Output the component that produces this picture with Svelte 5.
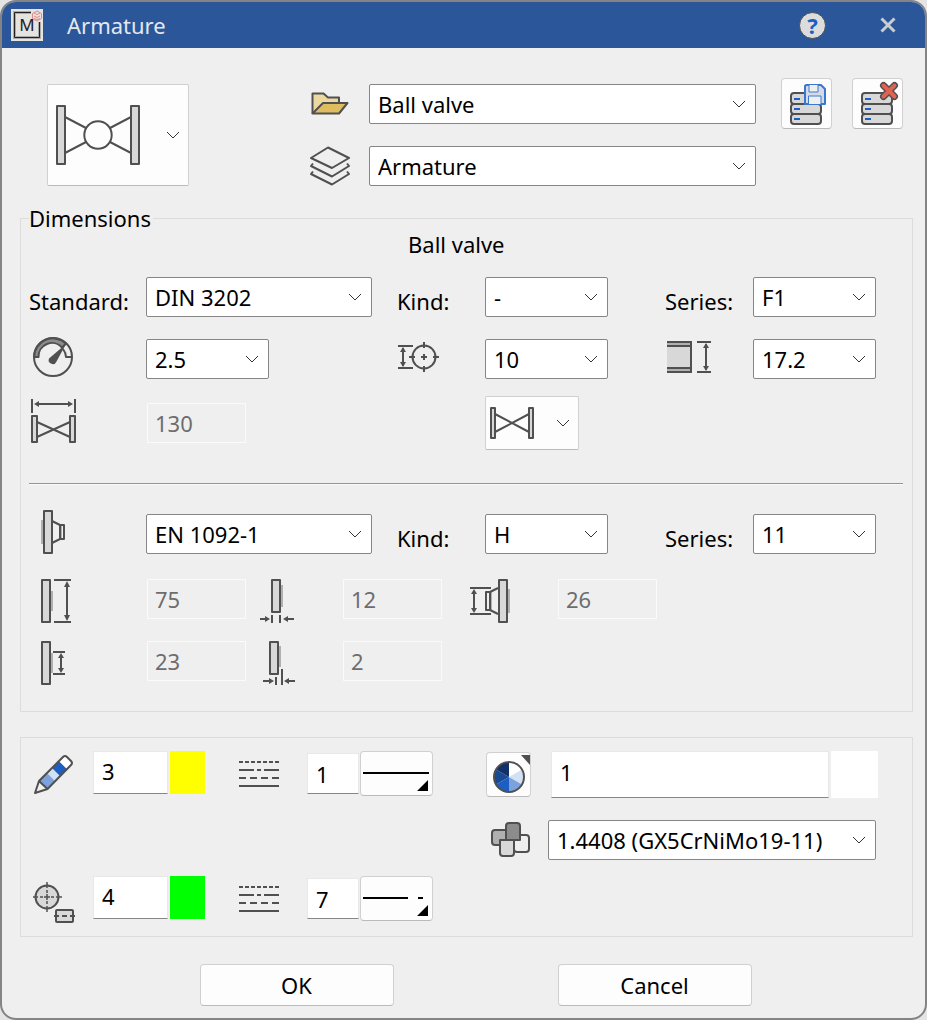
<script lang="ts">
	let preset = $state("Ball valve");
	let layer = $state("Armature");
	let color = $state("3");
	let lineType = $state("1");
	let axisColor = $state("4");
	let axisLineType = $state("7");
	let fill = $state("1");

	/**
	 * Sectors of the colour wheel, clockwise from the top
	 */
	const wheel = ["#ffffff", "#d3e1f5", "#7ba2dc", "#1c5fc4", "#1a4a94", "#12306a"];

	function sector(index: number) {
		const point = (step: number) => {
			const angle = (step * Math.PI) / 3;
			return `${22 + 15 * Math.sin(angle)} ${24 - 15 * Math.cos(angle)}`;
		};
		return `M22 24L${point(index)}A15 15 0 0 1 ${point(index + 1)}Z`;
	}
</script>

{#snippet chevron()}
	<svg class="chevron" width="14" height="8" viewBox="0 0 14 8" aria-hidden="true">
		<path d="M1 1l6 6 6-6" />
	</svg>
{/snippet}

{#snippet combo(label: string, value: string, size: string)}
	<div class="combo {size}">
		<select aria-label={label}>
			<option>{value}</option>
		</select>
		{@render chevron()}
	</div>
{/snippet}

{#snippet database()}
	<g class="db">
		<rect x="9" y="14" width="30" height="11" rx="3" />
		<rect x="9" y="25" width="30" height="10" rx="3" />
		<rect x="9" y="35" width="30" height="10" rx="3" />
	</g>
	<path class="lamp" d="M12 20h6M12 30h6M12 40h6" />
{/snippet}

{#snippet lineTypes()}
	<svg class="icon" width="40" height="28" viewBox="0 0 40 28" aria-hidden="true">
		<path d="M0 2h40" stroke-dasharray="4 2" />
		<path d="M0 10h15M18 10h4M25 10h15M0 26h40" />
		<path d="M0 18h40" stroke-dasharray="7 4" />
	</svg>
{/snippet}

<div class="dialog" role="dialog" aria-labelledby="title">
	<header>
		<svg width="32" height="32" viewBox="0 0 32 32" aria-hidden="true">
			<rect width="32" height="32" fill="#e6e4e1" />
			<path d="M20 3.500H3.500v25h25V13" fill="none" stroke="#aaa" stroke-width="3" />
			<path d="M20 3.500H3.500v25h25V13" fill="none" stroke="#222" />
			<text x="16" y="22" text-anchor="middle" font-size="17" fill="#222">M</text>
			<path d="M26 2l4.500 2.500v5L26 12l-4.500-2.500v-5zM23 4l3 1.500L29 4M23 7l3 1.500L29 7M23 9.500l3 1 3-1" fill="none" stroke="#dc8b8b" />
		</svg>
		<h1 id="title">Armature</h1>
		<button class="help" aria-label="Help">?</button>
		<button class="close" aria-label="Close">
			<svg width="16" height="16" viewBox="0 0 16 16"><path d="M1.500 1.500l13 13M14.500 1.500l-13 13" /></svg>
		</button>
	</header>

	<main>
		<section class="top">
			<button class="picker large" aria-label="Armature type">
				<svg class="icon" width="84" height="60" viewBox="0 0 84 60">
					<path d="M9 12l21 11M9 48l21-11M75 12L54 23M75 48L54 37" />
					<circle cx="42" cy="30" r="13.700" />
					<rect class="body" x="1" y="1" width="8" height="58" />
					<rect class="body" x="75" y="1" width="8" height="58" />
				</svg>
				{@render chevron()}
			</button>
			<div class="presets">
				<svg class="icon" width="42" height="26" viewBox="0 0 42 26" aria-hidden="true">
					<path d="M2.500 22.500v-20h11L18 6.500h11V12" fill="#edd9a0" />
					<path d="M2.500 22.500L13 12h24.500L29 22.500z" fill="#dfbc5e" />
				</svg>
				<div class="combo">
					<select aria-label="Preset" bind:value={preset}><option>Ball valve</option></select>
					{@render chevron()}
				</div>
				<svg class="icon" width="42" height="40" viewBox="0 0 42 40" aria-hidden="true">
					<path d="M18 1.500L39 12 22 22 1 12z" />
					<path d="M3 17.500L1 20l21 10.500L39 20l-2-2.500M3 25.500L1 28l21 10.500L39 28l-2-2.500" />
				</svg>
				<div class="combo">
					<select aria-label="Layer" bind:value={layer}><option>Armature</option></select>
					{@render chevron()}
				</div>
			</div>
			<div class="tools">
				<button aria-label="Save to database">
					<svg class="icon" width="49" height="49" viewBox="0 0 49 49">
						{@render database()}
						<g stroke="#3a78d0" fill="#d5dbe6">
							<path d="M24 6h15l4 4v15H23V7z" />
							<path d="M27 6v7h9V6M26.500 25v-8H39v8" fill="#efefef" stroke-width="1" />
						</g>
					</svg>
				</button>
				<button aria-label="Delete from database">
					<svg class="icon" width="49" height="49" viewBox="0 0 49 49">
						{@render database()}
						<path d="M30.500 6.500l11 11M41.500 6.500l-11 11" stroke-width="7" stroke-linecap="round" />
						<path d="M30.500 6.500l11 11M41.500 6.500l-11 11" stroke="#e06250" stroke-width="4" stroke-linecap="round" />
					</svg>
				</button>
			</div>
		</section>

		<fieldset>
			<legend>Dimensions</legend>
			<h2>Ball valve</h2>

			<div class="dims">
				<span class="label">Standard:</span>
				{@render combo("Standard", "DIN 3202", "wide")}
				<span class="label">Kind:</span>
				{@render combo("Kind", "-", "narrow")}
				<span class="label">Series:</span>
				{@render combo("Series", "F1", "narrow")}

				<svg class="icon gauge" width="42" height="42" viewBox="0 0 42 42" aria-hidden="true">
					<path d="M2 21A19 19 0 0 1 34 7.500L30 11.500A13.500 13.500 0 0 0 6.500 21z" fill="#8c8c8c" />
					<circle cx="21" cy="21" r="19" />
					<path d="M40 21h-6q0-4-3-8" />
					<path class="solid" d="M34 8L17 22.500a4 4 0 1 0 7.500 3z" />
				</svg>
				{@render combo("Nominal pressure", "2.5", "narrow")}
				<svg class="icon" width="42" height="30" viewBox="-1 0 42 30" aria-hidden="true">
					<path d="M0 4h15M0 26h15M5 6v18M26 0v6M26 24v6M11 15h6M35 15h6M23 15h6M26 12v6" />
					<circle cx="26" cy="15" r="11.500" />
					<path class="solid" d="M5 5l3 5H2zM5 25l3-5H2z" />
				</svg>
				{@render combo("Nominal diameter", "10", "narrow")}
				<svg class="icon" width="48" height="34" viewBox="-2 0 48 34" aria-hidden="true">
					<path d="M0 1h25v32H0z" fill="#d8d8d8" stroke="none" />
					<path d="M0 1h25v5H0zM0 28h25v5H0z" fill="#b0b0b0" stroke="none" />
					<path d="M0 2h25M0 6h25M0 28h25M0 32h25M24 1v32M30 2h14M30 32h14M39 4v26" />
					<path class="solid" d="M39 3l3 5h-6zM39 31l3-5h-6z" />
				</svg>
				{@render combo("Pipe diameter", "17.2", "narrow")}

				<svg class="icon length" width="45" height="45" viewBox="0 0 45 45" aria-hidden="true">
					<path d="M1 0v14M44 0v14M5 5h35M6 23l33 15M6 38l33-15" />
					<path class="solid" d="M3 5l5-3v6zM42 5l-5-3v6z" />
					<rect class="body" x="1" y="17" width="5" height="26" />
					<rect class="body" x="39" y="17" width="5" height="26" />
				</svg>
				<input class="readonly" aria-label="Length" value="130" disabled />
				<span></span>
				<button class="picker small" aria-label="Symbol">
					<svg class="icon" width="44" height="32" viewBox="0 0 44 32">
						<path d="M5 7l34 18M5 25L39 7" />
						<rect class="body" x="1" y="1" width="4" height="30" />
						<rect class="body" x="39" y="1" width="4" height="30" />
					</svg>
					{@render chevron()}
				</button>
			</div>

			<hr />

			<div class="dims">
				<svg class="icon flange" width="24" height="44" viewBox="0 0 24 44" aria-hidden="true">
					<path d="M0 10h3v24H0zM19 15h2v14h-2z" fill="#b0b0b0" stroke="none" />
					<path d="M11 11l8 4M11 33l8-4M19 15h4v14h-4z" />
					<rect class="body" x="3" y="1" width="8" height="42" />
				</svg>
				{@render combo("Flange standard", "EN 1092-1", "wide")}
				<span class="label">Kind:</span>
				{@render combo("Flange kind", "H", "narrow")}
				<span class="label">Series:</span>
				{@render combo("Flange series", "11", "narrow")}
			</div>

			<div class="flange-dims">
				<svg class="icon flange" width="31" height="44" viewBox="0 0 31 44" aria-hidden="true">
					<path d="M10 12h2v20h-2z" fill="#b0b0b0" stroke="none" />
					<rect class="body" x="1" y="1" width="8" height="42" />
					<path d="M13 1h17M13 43h17M26 5v34" />
					<path class="solid" d="M26 2l3 6h-6zM26 42l3-6h-6z" />
				</svg>
				<input class="readonly" aria-label="Flange diameter" value="75" disabled />
				<svg class="icon" width="34" height="44" viewBox="0 0 34 44" aria-hidden="true">
					<path d="M21 6h2v22h-2z" fill="#b0b0b0" stroke="none" />
					<rect class="body" x="12" y="1" width="8" height="32" />
					<path d="M12 36v8M20 36v8M0 40h8M25 40h9" />
					<path class="solid" d="M10 40l-5-3v6zM23 40l5-3v6z" />
				</svg>
				<input class="readonly" aria-label="Flange thickness" value="12" disabled />
				<svg class="icon" width="40" height="44" viewBox="0 0 40 44" aria-hidden="true">
					<path d="M37 10h3v24h-3zM20 13h2v18h-2z" fill="#b0b0b0" stroke="none" />
					<path d="M0 9h21M0 35h21M4 12v20M16 13h4v18h-4zM20 13l8-4M20 31l8 4" />
					<path class="solid" d="M4 10l3 5H1zM4 34l3-5H1z" />
					<rect class="body" x="29" y="1" width="8" height="42" />
				</svg>
				<input class="readonly" aria-label="Neck diameter" value="26" disabled />

				<svg class="icon flange" width="31" height="44" viewBox="0 0 31 44" aria-hidden="true">
					<path d="M10 12h2v20h-2z" fill="#b0b0b0" stroke="none" />
					<rect class="body" x="1" y="1" width="8" height="42" />
					<path d="M12 11h12M12 33h12M20 14v16" />
					<path class="solid" d="M20 12l3 5h-6zM20 32l3-5h-6z" />
				</svg>
				<input class="readonly" aria-label="Seal diameter" value="23" disabled />
				<svg class="icon" width="38" height="44" viewBox="-3 0 38 44" aria-hidden="true">
					<path d="M16 5h2v21h-2z" fill="#b0b0b0" stroke="none" />
					<rect class="body" x="7" y="1" width="8" height="32" />
					<path d="M13 36v8M19 28v16M0 40h8M24 40h8" />
					<path class="solid" d="M11 40l-5-3v6zM21 40l5-3v6z" />
				</svg>
				<input class="readonly" aria-label="Seal thickness" value="2" disabled />
			</div>
		</fieldset>

		<section class="attributes">
			<div class="lines">
				<div class="row">
					<svg class="icon" width="44" height="44" viewBox="-1 -2 44 44" aria-hidden="true">
						<path d="M5 27l8.500 8 8-8-8-8z" fill="#7ba2dc" stroke="none" />
						<path d="M13 19l8 8 5-5-8-8z" fill="#d3e1f5" stroke="none" />
						<path d="M18 14l8 8 7-7-8-8z" fill="#1c5fc4" stroke="none" />
						<path d="M25 7l8 8 5-5-7-8z" fill="#fff" stroke="none" />
						<path d="M5 27L29 3q2-2 4 0l4 4q2 2 0 4L13.500 35 1 39zl8.500 8" />
					</svg>
					<input class="color" aria-label="Colour" bind:value={color} />
					<span class="swatch yellow"></span>
					{@render lineTypes()}
					<input class="type" aria-label="Line type" bind:value={lineType} />
					<button class="pattern" aria-label="Choose line type">
						<svg width="71" height="43" viewBox="0 0 71 43">
							<path d="M2 20h66v2H2zM67 28v11H56z" />
						</svg>
					</button>
				</div>
				<div class="row">
					<svg class="icon" width="44" height="50" viewBox="1 -11 44 50" aria-hidden="true">
						<circle cx="15" cy="12" r="11.500" fill="#d8d8d8" />
						<path d="M15-3v6M15 5v3M15 9v6M15 16v3M15 21v6M0 12h6M8 12h3M12 12h6M19 12h3M24 12h6" stroke-width="1.500" />
						<rect class="body" x="24" y="25" width="17" height="12" rx="1" />
						<path d="M22 31h5M30 31h5M38 31h5" />
					</svg>
					<input class="color" aria-label="Axis colour" bind:value={axisColor} />
					<span class="swatch green"></span>
					{@render lineTypes()}
					<input class="type" aria-label="Axis line type" bind:value={axisLineType} />
					<button class="pattern" aria-label="Choose axis line type">
						<svg width="71" height="43" viewBox="0 0 71 43">
							<path d="M2 20h45v2H2zM57 20h5v2h-5zM67 28v11H56z" />
						</svg>
					</button>
				</div>
			</div>

			<div class="material">
				<div class="fill">
					<button class="wheel" aria-label="Choose fill colour">
						<svg class="icon" width="43" height="43" viewBox="0 0 43 43">
							{#each wheel as shade, index}
								<path d={sector(index)} fill={shade} stroke="none" />
							{/each}
							<circle cx="22" cy="24" r="15" />
							<path d="M34 2h9v10z" fill="#505050" stroke="none" />
						</svg>
					</button>
					<input aria-label="Fill colour" bind:value={fill} />
					<span class="swatch white"></span>
				</div>
				<div class="substance">
					<svg class="icon" width="40" height="36" viewBox="0 0 40 36" aria-hidden="true">
						<rect x="1" y="8" width="18" height="15" rx="3" fill="#b0b0b0" />
						<rect x="23" y="13" width="15" height="17" rx="3" fill="#efefef" />
						<path d="M15 18V4q0-3 3-3h8q3 0 3 3v14z" fill="#8c8c8c" />
						<path d="M9 18h14v13q0 3-3 3h-8q-3 0-3-3z" fill="#d8d8d8" />
					</svg>
					{@render combo("Material", "1.4408 (GX5CrNiMo19-11)", "full")}
				</div>
			</div>
		</section>

		<footer>
			<button>OK</button>
			<button>Cancel</button>
		</footer>
	</main>
</div>

<style>
	:global(body) {
		margin: 0;
		background: #e4e4e4;
	}

	.dialog {
		box-sizing: border-box;
		min-height: 100vh;
		border: 2px solid #848484;
		border-radius: 16px;
		overflow: hidden;
		background: #efefef;
		color: #000;
		font: 22px/28px "Noto Sans", "Open Sans", sans-serif;
	}

	button,
	input,
	select {
		box-sizing: border-box;
		margin: 0;
		padding: 0;
		font: inherit;
		color: inherit;
	}

	button {
		border: 1px solid #d0d0d0;
		border-bottom-color: #bababa;
		border-radius: 4px;
		background: #fdfdfd;
	}

	svg {
		display: block;
		flex: none;
	}

	/* Header */
	header {
		display: flex;
		align-items: center;
		height: 46px;
		padding: 0 29px 0 9px;
		background: #2b579a;
		color: #e4e8ee;
	}

	h1 {
		flex: 1;
		margin: 0 0 0 24px;
		font-size: 22px;
		font-weight: 400;
	}

	.help {
		width: 27px;
		height: 27px;
		margin-right: 54px;
		border: 1px solid #4b4b4b;
		border-radius: 50%;
		background: #dcdcdc;
		color: #1c5fc4;
		font-weight: 700;
		line-height: 24px;
	}

	.close {
		border: 0;
		background: none;
	}

	.close path {
		fill: none;
		stroke: #c9ccd1;
		stroke-width: 3;
	}

	/* Icons */
	.icon {
		fill: none;
		stroke: #505050;
		stroke-width: 2;
		stroke-linejoin: round;
	}

	.icon .body {
		fill: #d8d8d8;
	}

	.icon .solid {
		fill: #505050;
		stroke: none;
	}

	.icon .db {
		fill: #d8d8d8;
	}

	.icon .lamp {
		stroke: #1c5fc4;
	}

	.chevron {
		fill: none;
		stroke: #333;
	}

	/* Fields */
	.combo {
		position: relative;
	}

	.combo select {
		display: block;
		width: 100%;
		height: 40px;
		padding: 0 32px 0 8px;
		border: 1px solid #868686;
		border-radius: 2px;
		background: #fff;
		appearance: none;
	}

	.combo .chevron {
		position: absolute;
		top: 16px;
		right: 10px;
		pointer-events: none;
	}

	.wide {
		width: 226px;
	}

	.narrow {
		width: 123px;
	}

	.full {
		flex: 1;
		min-width: 0;
	}

	.readonly {
		width: 99px;
		height: 40px;
		margin-left: 1px;
		padding: 0 7px;
		border: 1px solid #fafafa;
		background: #efefef;
		color: #6d6d6d;
	}

	.picker {
		display: flex;
		align-items: center;
		justify-content: space-between;
		border-radius: 2px;
	}

	.large {
		width: 142px;
		height: 102px;
		padding: 0 8px;
	}

	.small {
		width: 94px;
		height: 54px;
		padding: 0 8px 0 4px;
	}

	/* Layout */
	main {
		padding: 30px 12px 12px 18px;
	}

	.top {
		display: flex;
		align-items: flex-start;
		padding: 0 10px 0 27px;
	}

	.top .large {
		margin-top: 6px;
	}

	.presets {
		flex: 1;
		display: grid;
		grid-template-columns: 42px 1fr;
		gap: 22px 17px;
		align-items: center;
		margin: 6px 25px 0 121px;
	}

	.tools {
		display: flex;
		gap: 20px;
	}

	.tools button {
		width: 51px;
		height: 51px;
	}

	fieldset {
		min-width: 0;
		margin: 18px 0 25px;
		padding: 0 9px 26px 8px;
		border: 1px solid #dcdcdc;
	}

	legend {
		padding: 0 2px 0 0;
	}

	h2 {
		margin: 0 0 21px;
		padding-left: 379px;
		font-size: 22px;
		font-weight: 400;
		line-height: 24px;
	}

	.dims {
		display: grid;
		grid-template-columns: 117px 251fr 88px 180fr 88px 150fr;
		row-gap: 17px;
		align-items: center;
	}

	.dims .combo,
	.dims .flange {
		align-self: start;
	}

	.dims > .icon {
		margin-top: -4px;
	}

	.label {
		margin: 10px 0 7px;
	}

	.gauge {
		margin-left: 3px;
	}

	.length {
		margin-left: 2px;
	}

	.flange {
		margin-left: 12px;
	}

	hr {
		margin: 33px 0 29px;
		border: 0;
		border-top: 1px solid #949494;
		border-bottom: 1px solid #fafafa;
	}

	.flange-dims {
		display: grid;
		grid-template-columns: 117fr 114fr 82fr 128fr 87fr 346fr;
		row-gap: 18px;
		margin-top: 20px;
	}

	.attributes {
		display: flex;
		padding: 13px 34px 15px 12px;
		border: 1px solid #dcdcdc;
	}

	.lines {
		display: flex;
		flex-direction: column;
		gap: 80px;
	}

	.row {
		display: flex;
		align-items: center;
		height: 45px;
	}

	.row input,
	.fill input {
		border: 1px solid #e8e8e8;
		border-bottom-color: #868686;
		background: #fff;
	}

	.row .color {
		width: 75px;
		height: 43px;
		margin: 0 2px 2px 16px;
		padding: 0 8px 4px;
	}

	.swatch {
		width: 35px;
		height: 43px;
		margin: 0 34px 2px 0;
	}

	.yellow {
		background: #ff0;
	}

	.green {
		background: #0f0;
	}

	.row .type {
		width: 52px;
		height: 41px;
		margin: 0 1px 0 28px;
		padding: 0 8px;
	}

	.pattern {
		width: 73px;
		height: 45px;
	}

	.material {
		flex: 1;
		min-width: 0;
		margin-left: 53px;
	}

	.fill {
		display: flex;
		align-items: center;
	}

	.wheel {
		width: 45px;
		height: 45px;
	}

	.fill input {
		flex: 1;
		min-width: 0;
		height: 47px;
		margin: 0 2px 0 20px;
		padding: 0 8px 6px;
	}

	.fill .white {
		width: 47px;
		height: 47px;
		margin: 0;
		background: #fff;
	}

	.substance {
		display: flex;
		align-items: center;
		gap: 17px;
		margin: 22px 2px 0 5px;
	}

	footer {
		display: flex;
		justify-content: center;
		gap: 164px;
		padding: 27px 0 0 18px;
	}

	footer button {
		width: 194px;
		height: 42px;
	}
</style>
